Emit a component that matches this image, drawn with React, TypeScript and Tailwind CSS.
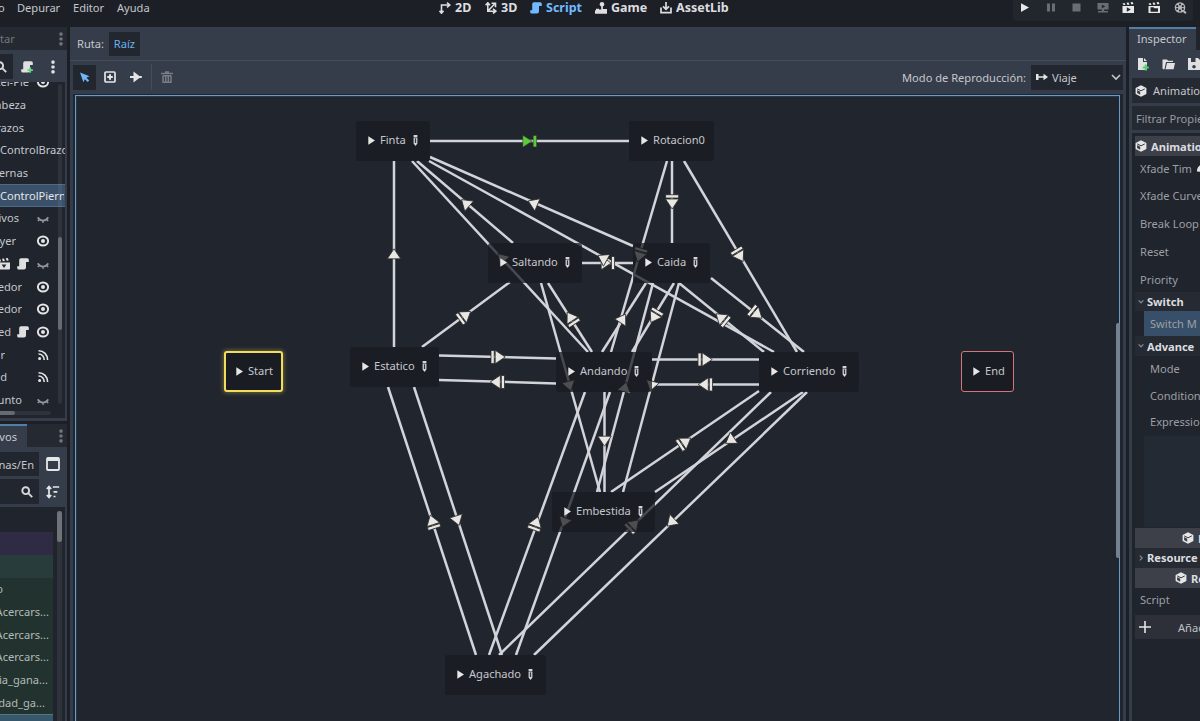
import React from "react";

type P = { className?: string };

const Eye = ({ className = "" }: P) => (
  <svg className={`h-3 w-3 shrink-0 ${className}`} viewBox="0 0 12 12" fill="none" stroke="#e4e5e7">
    <ellipse cx="6" cy="6" rx="5.1" ry="4.5" strokeWidth="1.9" />
    <circle cx="6" cy="6" r="2" fill="#e4e5e7" stroke="none" />
  </svg>
);
const Closed = ({ className = "" }: P) => (
  <svg className={`h-3 w-3 shrink-0 ${className}`} viewBox="0 0 12 12" fill="none" stroke="#94969b" strokeWidth="1.7">
    <path d="M.6 4.4Q6 11 11.400 4.400M2.400 6.400.9 8M9.600 6.400 11.100 8M6 7.600v2.200" />
  </svg>
);
const Signal = ({ className = "" }: P) => (
  <svg className={`h-3 w-3 shrink-0 ${className}`} viewBox="0 0 12 12" fill="none" stroke="#e4e5e7" strokeWidth="1.6">
    <path d="M1.5 1.7A9 9 0 0 1 10.6 11M1.5 5A5.6 5.6 0 0 1 7.2 11" />
    <circle cx="2.6" cy="9.6" r="1.5" fill="#e4e5e7" stroke="none" />
  </svg>
);
const ScriptIcon = ({ className = "", color = "#e0e0e0", plus = false }: P & { color?: string; plus?: boolean }) => (
  <svg className={`h-3 w-3 shrink-0 ${className}`} viewBox="0 0 12 12">
    <path fill={color} d="M4 0.3h6.3a1.5 1.5 0 0 1 1.5 1.5V4H9v5.6a2 2 0 0 1-2 2H1.8A1.6 1.6 0 0 1 .2 10V8.2h2V2.1A1.8 1.8 0 0 1 4 .3z" />
    {plus && <path stroke="#5fd97a" strokeWidth="1.8" d="M9.2 6.4v5.4M6.5 9.1h5.4" />}
  </svg>
);
const Clapper = ({ className = "" }: P) => (
  <svg className={`h-3 w-3 shrink-0 ${className}`} viewBox="0 0 12 12">
    <path fill="#e0e0e0" d="M0 4.6h12v6a1 1 0 0 1-1 1H1a1 1 0 0 1-1-1zM.2 1.6l2-.5 1 2.4H.9zM4 .8l2-.3.9 2.4-2 .4zM7.8.3l2-.3.9 2.4-2 .3z" />
    <path fill="#23272f" d="M3.6 6.6h4.8L6 10z" />
  </svg>
);
const Dots = ({ className = "", color = "#72767d" }: P & { color?: string }) => (
  <svg className={`h-3.5 w-1 shrink-0 ${className}`} viewBox="0 0 4 14" fill={color}>
    <rect x=".4" y=".5" width="3.2" height="3.2" rx="1" /><rect x=".4" y="5.4" width="3.2" height="3.2" rx="1" /><rect x=".4" y="10.3" width="3.2" height="3.2" rx="1" />
  </svg>
);
const Search = ({ className = "" }: P) => (
  <svg className={`h-3 w-3 shrink-0 ${className}`} viewBox="0 0 12 12" fill="none" stroke="#d8d9dc" strokeWidth="1.9">
    <circle cx="4.7" cy="4.7" r="3.4" /><path d="m7.2 7.2 4 4" />
  </svg>
);
const Cube = ({ className = "" }: P) => (
  <svg className={`h-3 w-3 shrink-0 ${className}`} viewBox="0 0 12 12">
    <path fill="#e6e6e6" d="M6 .2 11.4 3v6L6 11.8.6 9V3z" />
    <path fill="none" stroke="#3a3d45" strokeWidth="1" d="M2.2 3.9 6 5.8l3.8-1.9" />
    <path fill="#3a3d45" d="M2.1 5.1 5.2 6.7v3L2.1 8.1z" />
  </svg>
);
const Chevron = ({ className = "", d = "m2 3 3 3 3-3" }: P & { d?: string }) => (
  <svg className={`shrink-0 ${className}`} viewBox="0 0 10 10" fill="none" stroke="currentColor" strokeWidth="1.6"><path d={d} /></svg>
);

const treeRows: { t?: string; w?: string; icon?: "eye" | "closed" | "signal"; script?: boolean; clap?: boolean; sel?: boolean; left?: boolean }[] = [
  { t: "tel-Pie", w: "w-[29px]", icon: "eye" },
  { t: "abeza", w: "w-[26px]" },
  { t: "razos", w: "w-[24px]" },
  { t: "ControlBrazo", w: "w-[65px]", left: true },
  { t: "ernas", w: "w-[28px]" },
  { t: "ControlPiern", w: "w-[64px]", left: true, sel: true },
  { t: "ivos", w: "w-[19px]", icon: "closed" },
  { t: "yer", w: "w-[16px]", icon: "eye" },
  { clap: true, script: true, icon: "closed" },
  { t: "edor", w: "w-[22px]", icon: "eye" },
  { t: "edor", w: "w-[22px]", icon: "eye" },
  { t: "ed", w: "w-[11px]", script: true, icon: "eye" },
  { t: "r", w: "w-[5px]", icon: "signal" },
  { t: "d", w: "w-[7px]", icon: "signal" },
  { t: "unto", w: "w-[22px]", icon: "closed" },
];

function LeftDocks() {
  return (
    <div className="flex w-[67px] shrink-0 flex-col">
      <div className="flex h-[394px] flex-col bg-[#363d4a]">
        <div className="flex h-[23px] shrink-0 items-center justify-between bg-[#252931] pr-1 text-[#72767d]"><span>tar</span><Dots /></div>
        <div className="flex h-8 shrink-0 items-center pt-px">
          <div className="flex h-[25px] w-[13px] items-center justify-end bg-[#22262e] pr-1.5"><Search /></div>
          <ScriptIcon plus className="ml-2" />
          <Dots color="#e4e5e7" className="ml-[18px]" />
        </div>
        <div className="flex h-[336px] w-[65px] flex-col overflow-hidden bg-[#20242c]">
          <div className="relative h-[325px] overflow-hidden">
            <div className="-mt-[11px]">
              {treeRows.map((r, i) => (
                <div key={i} className={`flex h-[22.7px] w-[65px] items-center ${r.sel ? "border-y border-[#4a6b8a] bg-[#3a5169] text-[#e3e6ea]" : ""}`}>
                  {r.t && <span className={`-mt-px flex shrink-0 overflow-hidden whitespace-nowrap ${r.w} ${r.left ? "justify-start" : "justify-end"}`}>{r.t}</span>}
                  {r.clap && <Clapper className="-ml-0.5" />}
                  <span className="ml-auto flex items-center gap-2 pr-4">
                    {r.script && <ScriptIcon />}
                    {r.icon === "eye" && <Eye />}
                    {r.icon === "closed" && <Closed className="mt-0.5" />}
                    {r.icon === "signal" && <Signal />}
                  </span>
                </div>
              ))}
            </div>
            <div className="absolute top-0.5 left-[58px] h-[320px] w-1 rounded bg-[#b0b4c0]/10">
              <div className="mt-[153px] h-[93px] w-1 rounded bg-[#686a71]" />
            </div>
          </div>
          <div className="mt-1 h-1 w-[51px] rounded-r bg-[#2e323a]"><div className="h-1 w-[15px] rounded-r bg-[#686a71]" /></div>
        </div>
      </div>
      <div className="mt-[3px] flex min-h-0 flex-1 flex-col bg-[#363d4a]">
        <div className="flex h-[23px] shrink-0 justify-between bg-[#252931] pr-1">
          <div className="flex h-full w-[27px] items-center overflow-hidden border-t-2 border-[#537ea6] bg-[#363d4a] pb-px text-[#c9cbd0]"><span className="flex w-[17px] justify-end">vos</span></div>
          <Dots className="self-center" />
        </div>
        <div className="mt-[5px] flex h-6 shrink-0 items-center">
          <div className="flex h-6 w-[39px] items-center justify-end overflow-hidden bg-[#22262e] pr-[5px]">nas/En</div>
          <svg className="ml-[7px] h-3.5 w-3.5" viewBox="0 0 14 14" fill="none" stroke="#e6e7e9" strokeWidth="1.8"><rect x="1" y="1" width="12" height="12" rx="1" /><path d="M1 2.5h12" strokeWidth="3" /></svg>
        </div>
        <div className="mt-[3px] flex h-[25px] shrink-0 items-center">
          <div className="flex h-[25px] w-[39px] items-center justify-end bg-[#22262e] pr-1.5"><Search /></div>
          <svg className="ml-[7px] h-3.5 w-3.5" viewBox="0 0 14 14" fill="none" stroke="#e6e7e9" strokeWidth="1.7"><path d="M3 2.5v9M.8 4 3 1.6 5.2 4M.8 10 3 12.4 5.2 10M6.8 2h6.4M7.5 6.8h3.8M7.5 11.5h2" /></svg>
        </div>
        <div className="mt-[3px] flex min-h-0 w-[65px] flex-1 overflow-hidden bg-[#20242c]">
          <div className="flex w-[53px] shrink-0 flex-col pt-[25px]">
            <div className="h-[23px] shrink-0 bg-[#302b45]" />
            <div className="h-[23px] shrink-0 bg-[#283d3b]" />
            <div className="h-[136px] shrink-0 bg-[#22332f] text-[#b3bab9]">
              {[["o", "w-[3px]"], ["Acercars...", "w-[49px]"], ["Acercars...", "w-[49px]"], ["Acercars...", "w-[49px]"], ["ia_gana...", "w-[48px]"], ["dad_ga...", "w-[45px]"]].map(([t, w], i) => (
                <div key={i} className={`flex h-[22.7px] items-center justify-end overflow-hidden pb-px whitespace-nowrap ${w}`}>{t}</div>
              ))}
            </div>
            <div className="flex-1 border-t border-[#517688] bg-[#37586a]" />
          </div>
          <div className="mt-1 ml-1 h-full w-[5px] bg-[#2e323a]"><div className="h-[31px] w-[5px] rounded bg-[#70727a]" /></div>
        </div>
      </div>
    </div>
  );
}

const lines: number[][] = [
  [430, 141, 629, 141], [394, 347, 394, 161], [412, 161, 588, 352], [417, 161, 513, 243],
  [429, 161, 774, 352], [430, 157, 633, 246], [667, 161, 611, 352], [672, 161, 672, 243],
  [684, 161, 797, 352], [582, 263, 633, 263], [422, 347, 510, 282], [541, 283, 600, 492],
  [548, 283, 592, 352], [646, 283, 602, 352], [653, 283, 597, 492], [674, 283, 632, 352],
  [679, 283, 623, 492], [679, 283, 764, 352], [711, 278, 804, 352], [652, 359.5, 759, 359.5],
  [652, 384.5, 759, 384.5], [439, 355.5, 556, 358.5], [439, 380, 556, 383.5], [604.5, 392, 604.5, 492],
  [585, 392, 489, 655], [610, 392, 516, 655], [388, 387, 476, 655], [414, 387, 502, 655],
  [759, 391, 611, 492], [803, 392, 655, 492], [771, 392, 499, 655], [807, 392, 534, 655],
];
// x, y, heading in degrees, bar: -1 behind, 1 in front, 0 none
const arrows: [number, number, number, number][] = [
  [394, 254, -90, 0], [501.5, 257.5, -133, 0], [465.5, 203, -139, 0], [533, 203, -157, 0],
  [639, 257, 106, -1], [672.2, 203.8, 90, -1], [740.5, 257, 59, -1], [606, 263, 0, 1], [602.5, 258, -151, 0], [466.5, 314.5, -36, -1],
  [569.5, 386, 75, 0], [570, 316.5, -123, -1], [622.8, 318.5, -57, 0], [625, 387, -75, 0], [653.5, 318, 121, -1],
  [651.5, 386, 105, 0], [720, 317, -141, -1], [758, 315, 39, -1], [707, 359.5, 0, -1], [703.5, 384.5, 180, -1],
  [500, 357, 0, -1], [495.5, 382, 180, -1], [604.5, 441, 90, 0], [536.5, 521.5, -70, -1], [564, 522.5, 110, 0],
  [431.8, 520, -108, -1], [457.5, 520.5, 72, 0], [686.5, 441, -34, -1], [730, 440.5, 146, 0], [635, 523.5, -44, -1], [671, 522.5, 136, 0],
];

const nodes: { t: string; box: string; edit?: boolean; ring?: string }[] = [
  { t: "Finta", box: "left-[279px] top-[24px] w-[74px]", edit: true },
  { t: "Rotacion0", box: "left-[552px] top-[24px] w-[85px]" },
  { t: "Saltando", box: "left-[411px] top-[146px] w-[94px]", edit: true },
  { t: "Caida", box: "left-[556px] top-[146px] w-[77px]", edit: true },
  { t: "Estatico", box: "left-[273px] top-[250px] w-[89px]", edit: true },
  { t: "Andando", box: "left-[479px] top-[255px] w-[96px]", edit: true },
  { t: "Corriendo", box: "left-[682px] top-[255px] w-[100px]", edit: true },
  { t: "Embestida", box: "left-[475px] top-[395px] w-[103px]", edit: true },
  { t: "Agachado", box: "left-[368px] top-[558px] w-[101px]", edit: true },
  { t: "Start", box: "left-[147px] top-[254px] w-[59px]", ring: "border-2 border-[#f2dc5c] shadow-[0_0_4px_1px_rgba(242,220,92,0.35)]" },
  { t: "End", box: "left-[884px] top-[254px] w-[53px]", ring: "border border-[#d4757b]" },
];

function Canvas() {
  return (
    <div className="relative min-h-0 flex-1 overflow-hidden bg-[#21252d]">
      <svg className="absolute top-0 left-0" width="1042" height="624" viewBox="77 97 1042 624">
        <g stroke="#d2d4da" strokeWidth="2.5">
          {lines.map(([a, b, c, d], i) => <line key={i} x1={a} y1={b} x2={c} y2={d} />)}
        </g>
        <g fill="#e8e7e4" stroke="#2e2d2c" strokeWidth=".8">
          {arrows.map(([x, y, r, bar], i) => (
            <g key={i} transform={`translate(${x} ${y}) rotate(${r})`}>
              <path d="M-4.800-6.700 5.200 0-4.800 6.700z" />
              {bar === -1 && <rect x="-9" y="-6.500" width="3.200" height="13" />}
              {bar === 1 && <rect x="5.400" y="-6.500" width="3.200" height="13" />}
            </g>
          ))}
        </g>
        <path fill="#5cc93f" stroke="#23301f" strokeWidth=".5" d="M522.800 135.200 532.200 141.200l-9.400 6zM533.200 135.500h3.400v11.400h-3.400z" />
      </svg>
      {nodes.map((n) => (
        <div key={n.t} className={`absolute flex items-center rounded-[3px] text-[#c6c8cd] ${n.box} ${n.ring ? `h-[41px] bg-[#191c22] pb-0.5 ${n.ring} ${n.t === "Start" ? "pl-2.5" : "pl-[11px]"}` : "h-10 bg-[#181b21]/75 pl-3 pb-[3px]"}`}>
          <svg className="mt-px h-[9px] w-[7px] shrink-0" viewBox="0 0 7 9"><path fill="#e6e6e6" d="M.3.3 7 4.500.3 8.700z" /></svg>
          <span className="ml-[5px]">{n.t}</span>
          {n.edit && (
            <svg className="mt-px ml-[7px] h-[11px] w-[5px] shrink-0" viewBox="0 0 5 11"><path fill="#d4d5d8" d="M.6 0h3.800v2h-3.800zM.6 2.600h3.800v6L2.500 11 .6 8.600z" /><path stroke="#33363d" strokeWidth="1.300" d="M2.500 3.300v4.700" /></svg>
          )}
        </div>
      ))}
    </div>
  );
}

function MainPanel() {
  return (
    <div className="ml-[3px] flex w-[1056px] shrink-0 flex-col bg-[#363d4a]">
      <div className="flex h-[33.500px] shrink-0 items-center border-b border-[#454d5a] px-[7px] pt-px">
        <span>Ruta:</span>
        <div className="ml-[5px] flex h-6 w-[31px] items-center justify-center bg-[#22262e] text-[#6bb1f0]">Raíz</div>
      </div>
      <div className="flex h-[33.500px] shrink-0 items-center">
        <div className="ml-[3px] flex h-[25px] w-[23px] items-center justify-center bg-[#22262e]">
          <svg className="h-[11px] w-[11px]" viewBox="0 0 11 11"><path fill="#6fb5f7" d="M1 .5 10.500 4.200 7.400 5.700l2.800 2.900-1.500 1.500-2.900-2.800-1.400 3z" /></svg>
        </div>
        <svg className="ml-2 h-3 w-3" viewBox="0 0 12 12" fill="none" stroke="#e4e5e7" strokeWidth="1.700"><rect x="1" y="1" width="10" height="10" rx="1" /><path d="M6 3.200v5.600M3.200 6h5.600" strokeWidth="2" /></svg>
        <svg className="ml-3.5 h-3 w-3" viewBox="0 0 12 12" fill="#e4e5e7"><path d="M0 5h3.500V.6L9.300 5h2.500v2H9.300l-5.800 4.400V7H0z" /></svg>
        <div className="ml-[9px] h-[26px] w-px bg-[#454d5a]" />
        <svg className="ml-[9px] h-3 w-3" viewBox="0 0 12 12" fill="none" stroke="#777d87" strokeWidth="1.500"><path d="M0 2.500h12M4 1h4" strokeWidth="1.700" /><path d="M1.800 4.800h8.400M2 4.800v6.500h8V4.800M4.700 5v6M7.300 5v6" /></svg>
        <span className="ml-auto">Modo de Reproducción:</span>
        <div className="mr-[3px] ml-[5px] flex h-[25px] w-[92px] items-center bg-[#22262e] pr-0.5 pl-[5px]">
          <svg className="h-2 w-3" viewBox="0 0 12 8" fill="#e4e5e7"><rect y="1" width="2.500" height="6" /><path d="M2 3.200h5.500V.8L12 4 7.500 7.200V4.800H2z" /></svg>
          <span className="ml-1">Viaje</span>
          <Chevron className="ml-auto h-2.5 w-2.5 text-[#c5c8cd]" d="m1 3 4 4 4-4" />
        </div>
      </div>
      <div className="mr-[3px] ml-[3px] flex min-h-0 flex-1 flex-col bg-[#1f262f] pt-px pr-[3px] pl-[2px]">
        <div className="relative flex min-h-0 flex-1 flex-col border-x border-t border-[#6c9ac4] bg-[#22384c] pt-px pl-px">
          <Canvas />
          <div className="absolute top-[227px] -right-px h-[235px] w-[4px] rounded-sm bg-[#74828e]" />
        </div>
      </div>
    </div>
  );
}

function Inspector() {
  return (
    <div className="ml-[3px] flex min-w-0 flex-1 flex-col overflow-hidden bg-[#363d4a] whitespace-nowrap">
      <div className="flex h-[23px] shrink-0 bg-[#20242b]"><div className="flex w-[67px] items-center border-t-2 border-[#537ea6] bg-[#363d4a] pb-0.5 pl-2">Inspector</div></div>
      <div className="flex h-[28px] shrink-0 items-center gap-[13px] pl-2">
        <svg className="h-[13px] w-3 shrink-0" viewBox="0 0 12 13"><path fill="#e0e0e0" d="M1 0h5v4h4v8H1z M7 0l3 3H7z" /><path stroke="#55cf6c" strokeWidth="2" d="M8.700 6.500v6M5.700 9.500h6" /></svg>
        <svg className="h-3 w-[13px] shrink-0" viewBox="0 0 13 12" fill="#e0e0e0"><path d="M.5 1.500h4.500l1 1.200h5V4H4L2.500 11.300H1.500a1 1 0 0 1-1-1zM5 5h8l-1.400 6.300H3.500z" /></svg>
        <svg className="h-3 w-3 shrink-0" viewBox="0 0 12 12"><path fill="#e0e0e0" d="M0 0h10l2 2v10H0z" /><path fill="#363d4a" d="M3 0h4.500v4H3zM6 7a1.800 1.800 0 1 1 0 3.600A1.800 1.800 0 0 1 6 7z" /></svg>
      </div>
      <div className="ml-[3px] flex h-[25px] shrink-0 items-center bg-[#252931] pl-[3px]"><Cube /><span className="ml-[6px]">AnimationNode</span></div>
      <div className="mt-[3px] ml-[3px] flex h-[24px] shrink-0 items-center bg-[#252931] pl-1 text-[#989ba1]">Filtrar Propiedades</div>
      <div className="mt-[3px] ml-[3px] flex min-h-0 flex-1 flex-col bg-[#20242c] pt-[3px] pl-[3px] text-[#9c9fa5]">
        <div className="flex h-5 shrink-0 items-center bg-[#3d4048] font-bold text-[#dcdde0]"><Cube /><span className="ml-1">AnimationNode</span></div>
        <div className="flex h-[24px] shrink-0 items-center pl-[5px]">Xfade Tim<svg className="ml-1 h-2.5 w-2.5 shrink-0" viewBox="0 0 10 10" fill="#e6e6e6"><path d="M1 8.500C.5 5 4 1 9 0v9z" /></svg></div>
        {["Xfade Curve", "Break Loop", "Reset", "Priority"].map((t) => <div key={t} className="flex h-7 shrink-0 items-center pt-0.5 pl-[5px]">{t}</div>)}
        <div className="flex h-[19px] shrink-0 items-center bg-[#262a32] pl-0.5 font-bold text-[#dcdde0]"><Chevron className="h-2.5 w-2 text-[#82868d]" /><span className="ml-[2px]">Switch</span></div>
        <div className="ml-[9px] flex h-[25px] shrink-0 items-center bg-[#374f68] pl-1.5">Switch M</div>
        <div className="flex h-5 shrink-0 items-center bg-[#262a32] pl-0.5 font-bold text-[#dcdde0]"><Chevron className="h-2.5 w-2 text-[#82868d]" /><span className="ml-[2px]">Advance</span></div>
        <div className="ml-[15px] flex h-6 shrink-0 items-center">Mode</div>
        <div className="ml-[15px] flex h-[31px] shrink-0 items-center">Condition</div>
        <div className="ml-[15px] flex h-[21px] shrink-0 items-center">Expression</div>
        <div className="mt-1 ml-[9px] h-[91px] shrink-0 bg-[#242a33]" />
        <div className="mt-px flex h-5 shrink-0 items-center bg-[#3d4048] pl-[47px] font-bold text-[#dcdde0]"><Cube /><span className="ml-1">Node</span></div>
        <div className="flex h-5 shrink-0 items-center bg-[#262a32] pb-px pl-0.5 font-bold text-[#dcdde0]"><Chevron className="h-2.5 w-2 text-[#82868d]" d="m3.500 2 3 3-3 3" /><span className="ml-[2px]">Resource</span></div>
        <div className="flex h-5 shrink-0 items-center bg-[#3d4048] pl-[40px] font-bold text-[#dcdde0]"><Cube /><span className="ml-1">Ref</span></div>
        <div className="flex h-[22px] shrink-0 items-center pl-[5px]">Script</div>
        <div className="mt-[5px] flex h-6 shrink-0 items-center bg-[#2d3038] pl-1 text-[#bfc1c6]">
          <svg className="h-3 w-3 shrink-0" viewBox="0 0 12 12" stroke="#e4e5e7" strokeWidth="1.600"><path d="M6 0v12M0 6h12" /></svg>
          <span className="ml-[27px]">Añadir</span>
        </div>
      </div>
    </div>
  );
}

function TopBar() {
  return (
    <div className="flex h-[27px] shrink-0 items-start">
      <div className="flex h-[15px] w-[439px] shrink-0 items-center">
        <span className="-ml-[2px] w-[19px]">o</span><span className="w-14">Depurar</span><span className="w-11">Editor</span><span>Ayuda</span>
      </div>
      <div className="flex h-[15px] items-center text-[12.500px] font-bold text-[#dcdee0]">
        <svg className="h-3 w-3" viewBox="0 0 12 12" fill="none" stroke="#dcdee0" strokeWidth="1.600"><path d="M2.500 11V3H10M.5 8.800l2 2.400 2-2.400M8 .7 10.800 3 8 5.300" /></svg>
        <span className="ml-1 w-[30px]">2D</span>
        <svg className="h-3 w-3" viewBox="0 0 12 12" fill="none" stroke="#dcdee0" strokeWidth="1.600"><path d="M2.800 1.500v7.700h7.500M2.800 9.200 9.500 2M.6 3.200l2.200-2.400L5 3.200M8 6.900l2.900 2.300L8 11.500M6.500 1.300h4v4" /></svg>
        <span className="ml-1 w-[29px]">3D</span>
        <ScriptIcon color="#70baff" /><span className="ml-1 w-[49px] text-[#70baff]">Script</span>
        <svg className="h-3 w-3" viewBox="0 0 12 12" fill="#dcdee0"><circle cx="7" cy="2.300" r="2.300" /><path d="M6.200 3h1.700v4H12v4.700H0V8.200h1V6.800h3v.7h2.200z" /></svg>
        <span className="ml-1 w-[49px]">Game</span>
        <svg className="h-3 w-3" viewBox="0 0 12 12" fill="none" stroke="#dcdee0" strokeWidth="1.700"><path d="M6 0v7M3 4.400l3 3 3-3M1 5.500v5.200h10V5.500" /></svg>
        <span className="ml-1">AssetLib</span>
      </div>
      <div className="ml-auto mr-[7px] flex h-[21px] w-[180px] shrink-0 items-start rounded-b-sm bg-[#22262d] pt-[1px] pl-1.5">
        <svg className="h-[13px] w-[174px]" viewBox="0 0 174 13">
          <path fill="#e8e8e8" d="M2 2.200v8.800L10 6.600z" />
          <g fill="#6a6d73"><rect x="28" y="2.500" width="3" height="8" /><rect x="33" y="2.500" width="3" height="8" /><rect x="53.500" y="2.500" width="8" height="8" /><path d="M78.500 2h11v6.500h-4.300V10H89v1.500H79V10h3.800V8.500h-4.300z" /><path d="M82.800 3.500v3.800l3.600-1.900z" fill="#22262d" /></g>
          <g transform="translate(103.500 1)"><path fill="#e8e8e8" d="M0 4h11.500v7H0zM0 1.500l2-.5 1 2H1zM4 .8l2-.4 1 2.200-2 .3zM8 .2l2-.3 1 2.200-2 .3z" /><path fill="#22262d" d="M4.300 5.200v4.600l4-2.300z" /></g>
          <g transform="translate(129.500 1)"><path fill="#e8e8e8" d="M0 4h11.500v7H0zM0 1.500l2-.5 1 2H1zM4 .8l2-.4 1 2.200-2 .3zM8 .2l2-.3 1 2.200-2 .3z" /><path fill="#22262d" d="M2 5.300h3l.8 1h3.700v3.400H2z" /></g>
          <g transform="translate(155.500 1)"><circle cx="5.500" cy="5.500" r="5.300" fill="#b5b7ba" /><path stroke="#b5b7ba" strokeWidth="2" d="m9 9 2.400 2.300" /><g fill="#22262d"><circle cx="5.500" cy="2.500" r="1.100" /><circle cx="5.500" cy="8.500" r="1.100" /><circle cx="2.700" cy="4.200" r="1.100" /><circle cx="8.300" cy="4.200" r="1.100" /><circle cx="2.700" cy="7" r="1.100" /><circle cx="8.300" cy="7" r="1.100" /></g></g>
        </svg>
      </div>
    </div>
  );
}

export default function App() {
  return (
    <div className="flex h-[721px] w-[1200px] flex-col overflow-hidden bg-[#1c2026] font-['Noto_Sans',sans-serif] text-[11.100px] leading-[15px] text-[#c4c7cc]">
      <TopBar />
      <div className="flex min-h-0 flex-1">
        <LeftDocks />
        <MainPanel />
        <Inspector />
      </div>
    </div>
  );
}
